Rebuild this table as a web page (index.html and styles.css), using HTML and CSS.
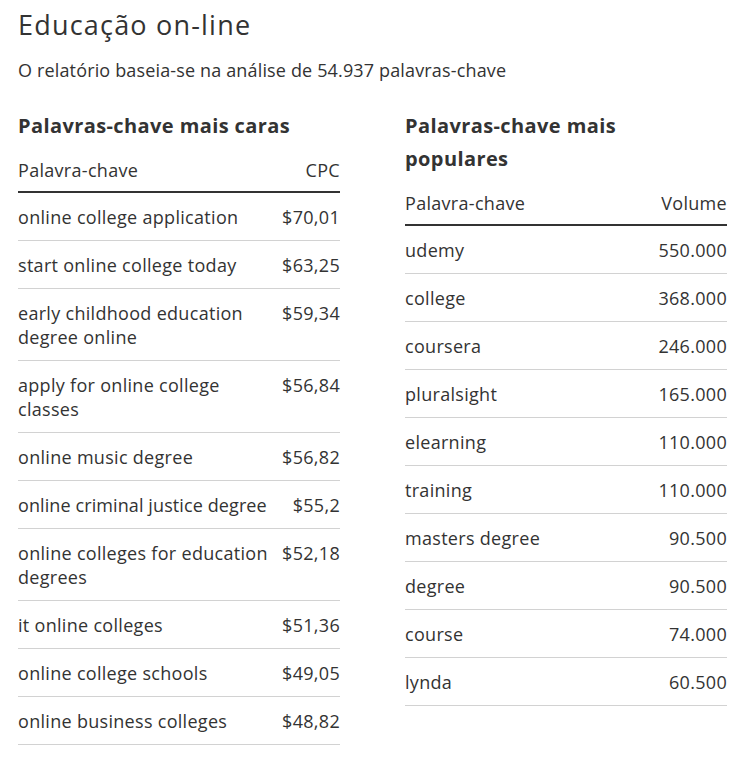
FILE: index.html
```html
<!DOCTYPE html>
<html lang="pt">
<head>
<meta charset="utf-8">
<title>Educação on-line</title>
<link rel="stylesheet" href="styles.css">
</head>
<body>
<main class="page">
  <h1 class="title">Educação on-line</h1>
  <p class="subtitle">O relatório baseia-se na análise de 54.937 palavras-chave</p>
  <div class="columns">
    <section class="col">
      <h2 class="col-title">Palavras-chave mais caras</h2>
      <table class="kw">
        <thead><tr><th class="k">Palavra-chave</th><th class="v">CPC</th></tr></thead>
        <tbody>
          <tr><td class="k">online college application</td><td class="v">$70,01</td></tr>
          <tr><td class="k">start online college today</td><td class="v">$63,25</td></tr>
          <tr><td class="k">early childhood education degree online</td><td class="v">$59,34</td></tr>
          <tr><td class="k">apply for online college classes</td><td class="v">$56,84</td></tr>
          <tr><td class="k">online music degree</td><td class="v">$56,82</td></tr>
          <tr><td class="k k-single">online criminal justice degree</td><td class="v">$55,2</td></tr>
          <tr><td class="k">online colleges for education degrees</td><td class="v">$52,18</td></tr>
          <tr><td class="k">it online colleges</td><td class="v">$51,36</td></tr>
          <tr><td class="k">online college schools</td><td class="v">$49,05</td></tr>
          <tr><td class="k">online business colleges</td><td class="v">$48,82</td></tr>
        </tbody>
      </table>
    </section>
    <section class="col">
      <h2 class="col-title">Palavras-chave mais populares</h2>
      <table class="kw">
        <thead><tr><th class="k">Palavra-chave</th><th class="v">Volume</th></tr></thead>
        <tbody>
          <tr><td class="k">udemy</td><td class="v">550.000</td></tr>
          <tr><td class="k">college</td><td class="v">368.000</td></tr>
          <tr><td class="k">coursera</td><td class="v">246.000</td></tr>
          <tr><td class="k">pluralsight</td><td class="v">165.000</td></tr>
          <tr><td class="k">elearning</td><td class="v">110.000</td></tr>
          <tr><td class="k">training</td><td class="v">110.000</td></tr>
          <tr><td class="k">masters degree</td><td class="v">90.500</td></tr>
          <tr><td class="k">degree</td><td class="v">90.500</td></tr>
          <tr><td class="k">course</td><td class="v">74.000</td></tr>
          <tr><td class="k">lynda</td><td class="v">60.500</td></tr>
        </tbody>
      </table>
    </section>
  </div>
</main>
</body>
</html>
```
FILE: styles.css
```css
* { box-sizing: border-box; }
html, body { margin: 0; padding: 0; background: #fff; }
body {
  font-family: "Open Sans", "Noto Sans", "DejaVu Sans", sans-serif;
  color: #333;
  font-size: 18px;
  line-height: 24px;
  letter-spacing: 0.3px;
}
.page { padding: 8px 18px 0 18px; }
.title {
  margin: 0;
  font-size: 27px;
  line-height: 34px;
  font-weight: 400;
  letter-spacing: 1.2px;
  color: #333;
}
.subtitle {
  margin: 16px 0 0 0;
  font-size: 18px;
  line-height: 24px;
  letter-spacing: 0.15px;
}
.columns {
  display: grid;
  grid-template-columns: 322px 322px;
  column-gap: 65px;
  margin-top: 27px;
  align-items: start;
}
.col-title {
  margin: 0 0 8px 0;
  max-width: 300px;
  font-size: 20px;
  line-height: 33px;
  font-weight: 700;
  letter-spacing: 0.4px;
}
.kw {
  width: 100%;
  border-collapse: collapse;
}
.kw th {
  font-weight: 400;
  padding: 8px 0 9px 0;
  border-bottom: 2px solid #333;
  text-align: left;
}
.kw td {
  padding: 12px 0 11px 0;
  border-bottom: 1px solid #d2d2d2;
  vertical-align: top;
}
.kw .k-single { white-space: nowrap; letter-spacing: 0.1px; }
.kw .v { text-align: right; white-space: nowrap; padding-left: 6px; }
```
